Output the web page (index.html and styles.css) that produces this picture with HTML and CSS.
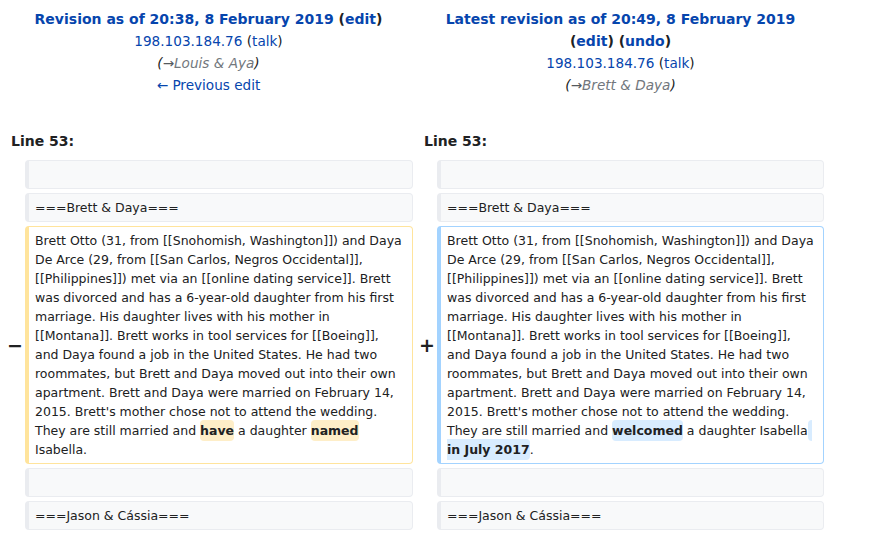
FILE: index.html
```html
<!DOCTYPE html>
<html lang="en">
<head>
<meta charset="utf-8">
<title>Diff</title>
<link rel="stylesheet" href="styles.css">
</head>
<body>
<div class="diff">
  <div class="title title-old">
    <div class="tline"><strong><a class="link">Revision as of 20:38, 8 February 2019</a> <span class="tools">(<a class="link">edit</a>)</span></strong></div>
    <div class="tline"><a class="link">198.103.184.76</a> (<a class="link">talk</a>)</div>
    <div class="tline comment">(<span class="arrow">→</span><span class="auto">Louis &amp; Aya</span>)</div>
    <div class="tline"><a class="link">← Previous edit</a></div>
  </div>
  <div class="title title-new">
    <div class="tline"><strong><a class="link">Latest revision as of 20:49, 8 February 2019</a> <span class="tools">(<a class="link">edit</a>) (<a class="link">undo</a>)</span></strong></div>
    <div class="tline"><a class="link">198.103.184.76</a> (<a class="link">talk</a>)</div>
    <div class="tline comment">(<span class="arrow">→</span><span class="auto">Brett &amp; Daya</span>)</div>
  </div>

  <div class="lineno lineno-old">Line 53:</div>
  <div class="lineno lineno-new">Line 53:</div>

  <div class="marker"></div>
  <div class="cell context"><br></div>
  <div class="marker"></div>
  <div class="cell context"><br></div>

  <div class="marker"></div>
  <div class="cell context">===Brett &amp; Daya===</div>
  <div class="marker"></div>
  <div class="cell context">===Brett &amp; Daya===</div>

  <div class="marker">−</div>
  <div class="cell deleted">Brett Otto (31, from [[Snohomish, Washington]]) and Daya De Arce (29, from [[San Carlos, Negros Occidental]], [[Philippines]]) met via an [[online dating service]]. Brett was divorced and has a 6-year-old daughter from his first marriage. His daughter lives with his mother in [[Montana]]. Brett works in tool services for [[Boeing]], and Daya found a job in the United States. He had two roommates, but Brett and Daya moved out into their own apartment. Brett and Daya were married on February 14, 2015. Brett's mother chose not to attend the wedding. They are still married and <del class="chg">have</del> a daughter <del class="chg">named</del> Isabella.</div>
  <div class="marker">+</div>
  <div class="cell added">Brett Otto (31, from [[Snohomish, Washington]]) and Daya De Arce (29, from [[San Carlos, Negros Occidental]], [[Philippines]]) met via an [[online dating service]]. Brett was divorced and has a 6-year-old daughter from his first marriage. His daughter lives with his mother in [[Montana]]. Brett works in tool services for [[Boeing]], and Daya found a job in the United States. He had two roommates, but Brett and Daya moved out into their own apartment. Brett and Daya were married on February 14, 2015. Brett's mother chose not to attend the wedding. They are still married and <ins class="chg">welcomed</ins> a daughter Isabella<ins class="chg"> in July 2017</ins>.</div>

  <div class="marker"></div>
  <div class="cell context"><br></div>
  <div class="marker"></div>
  <div class="cell context"><br></div>

  <div class="marker"></div>
  <div class="cell context">===Jason &amp; Cássia===</div>
  <div class="marker"></div>
  <div class="cell context">===Jason &amp; Cássia===</div>
</div>
</body>
</html>
```

FILE: styles.css
```css
html, body {
  margin: 0;
  padding: 0;
  background: #ffffff;
}

body {
  font-family: "DejaVu Sans", "Noto Sans", sans-serif;
  color: #202122;
}

.diff {
  display: grid;
  grid-template-columns: 17px 388px 16px 387px;
  column-gap: 4px;
  row-gap: 4px;
  padding: 8px 0 0 4px;
}

.title {
  text-align: center;
  font-size: 13.6px;
  line-height: 22px;
}

.title strong {
  font-size: 14px;
}

.title-old,
.lineno-old {
  grid-column: 1 / 3;
}

.title-new,
.lineno-new {
  grid-column: 3 / 5;
}

.link {
  color: #0645ad;
  text-decoration: none;
  cursor: pointer;
}

.tools {
  white-space: nowrap;
}

.comment {
  font-style: italic;
  color: #202122;
}

.comment .arrow {
  color: #54595d;
}

.comment .auto {
  color: #72777d;
}

.lineno {
  font-weight: bold;
  font-size: 14px;
  line-height: 22px;
  padding: 30px 7px 4px 7px;
}

.marker {
  align-self: center;
  text-align: right;
  font-weight: bold;
  font-size: 19px;
  line-height: 1.2;
  margin-right: -2px;
}

.cell {
  font-size: 12.5px;
  line-height: 19px;
  white-space: pre-wrap;
  word-wrap: break-word;
  border-style: solid;
  border-width: 1px 1px 1px 4px;
  border-radius: 4px;
  padding: 4px 6px 4px 6px;
}

.context {
  background: #f8f9fa;
  border-color: #eaecf0;
}

.deleted {
  background: #ffffff;
  border-color: #ffe49c;
}

.added {
  background: #ffffff;
  border-color: #a3d3ff;
}

.chg {
  font-weight: bold;
  text-decoration: none;
  border-radius: 4px;
  padding: 3px 0;
}

.deleted .chg {
  background: #feeec8;
}

.added .chg {
  background: #d8ecff;
}
```
